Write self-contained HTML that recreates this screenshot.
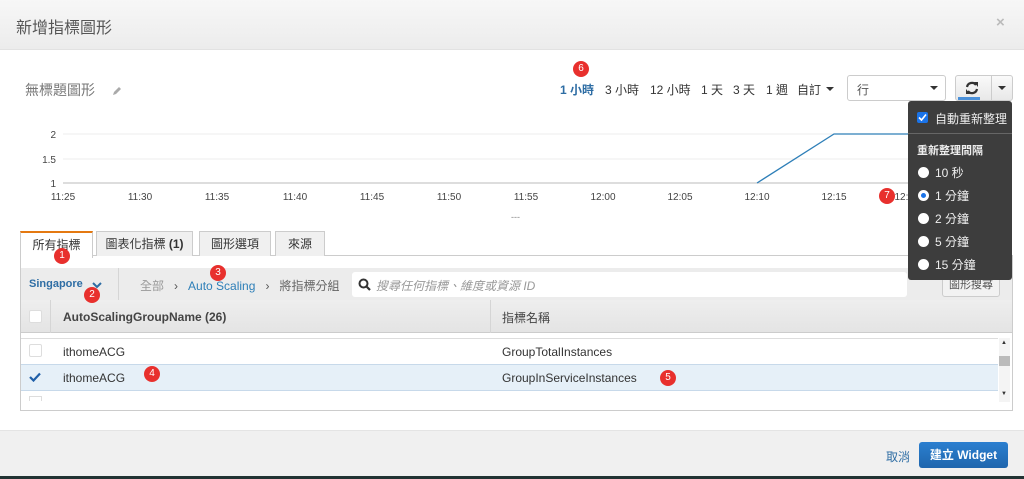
<!DOCTYPE html>
<html><head><meta charset="utf-8"><style>
*{box-sizing:border-box;margin:0;padding:0}
body{width:1024px;height:479px;overflow:hidden;position:relative;background:#fff;font-family:"Liberation Sans","Noto Sans CJK TC",sans-serif;font-size:12px;color:#333}
.a{position:absolute;white-space:nowrap}
.hdr{left:0;top:0;width:1024px;height:50px;background:linear-gradient(#f7f7f7,#ececec);border-bottom:1px solid #e2e2e2}
.ftr{left:0;top:430px;width:1024px;height:49px;background:#f0f0f0;border-top:1px solid #e4e4e4}
.b{position:absolute;width:16px;height:16px;border-radius:50%;background:#e8302d;color:#fff;font-size:10px;text-align:center;line-height:16px}
.xl{position:absolute;top:192px;font-size:10px;color:#444;transform:translateX(-50%)}
.tab{position:absolute;top:231px;height:25px;border:1px solid #ccc;border-bottom:none;background:#f0f0f0;text-align:center;line-height:24px;font-size:12px}
.dd{position:absolute;left:908px;top:101px;width:104px;height:179px;background:#3d3d3d;border-radius:3px;color:#eee;font-size:12px}
.rd{position:absolute;left:10px;width:11px;height:11px;border-radius:50%;background:#fff}
.car{position:absolute;width:0;height:0;border-left:4px solid transparent;border-right:4px solid transparent;border-top:4px solid #333}
.tr{position:absolute;top:81px;font-size:12px;color:#333;white-space:nowrap}
</style></head><body>
<div class="a hdr"></div>
<div class="a" style="left:16px;top:14px;font-size:16px;color:#555">新增指標圖形</div>
<div class="a" style="left:996px;top:14px;font-size:15px;color:#bbb;font-weight:bold">×</div>

<div class="a" style="left:25px;top:80px;font-size:14px;color:#777">無標題圖形</div>
<svg class="a" style="left:111px;top:85px" width="12" height="12"><path d="M2 10 L3 7 L8 2 L10 4 L5 9 Z" fill="#aaa"/></svg>

<div class="tr" style="left:560px;color:#2e6da4;font-weight:bold">1 小時</div>
<div class="tr" style="left:605px">3 小時</div>
<div class="tr" style="left:650px">12 小時</div>
<div class="tr" style="left:701px">1 天</div>
<div class="tr" style="left:733px">3 天</div>
<div class="tr" style="left:766px">1 週</div>
<div class="tr" style="left:797px">自訂</div>
<div class="car" style="left:826px;top:87px"></div>
<div class="a" style="left:847px;top:75px;width:99px;height:26px;border:1px solid #ccc;border-radius:3px"><span class="a" style="left:9px;top:5px;color:#555">行</span><div class="car" style="left:82px;top:10px"></div></div>
<div class="a" style="left:955px;top:75px;width:58px;height:26px;border:1px solid #ccc;border-radius:3px;background:linear-gradient(#fafafa,#e8e8e8)">
<svg class="a" style="left:8px;top:5px" width="16" height="14" viewBox="0 0 16 14"><path d="M3 6 A5 5 0 0 1 12 4" fill="none" stroke="#333" stroke-width="2.2"/><path d="M10 1 L14 1 L14 6 Z" fill="#333"/><path d="M13 8 A5 5 0 0 1 4 10" fill="none" stroke="#333" stroke-width="2.2"/><path d="M6 13 L2 13 L2 8 Z" fill="#333"/></svg>
<span class="a" style="left:35px;top:0;height:24px;border-left:1px solid #ccc"></span><div class="car" style="left:42px;top:10px"></div></div>
<div class="a" style="left:958px;top:97px;width:22px;height:3px;background:#4a90d9"></div>

<svg class="a" style="left:0;top:120px" width="1024" height="80">
<line x1="63" y1="14" x2="1012" y2="14" stroke="#eee"/>
<line x1="63" y1="39" x2="1012" y2="39" stroke="#eee"/>
<line x1="63" y1="63" x2="1012" y2="63" stroke="#bbb"/>
<polyline points="757,63 834,14 1012,14" fill="none" stroke="#2e7fb8" stroke-width="1.3"/>
<text x="56" y="18" font-size="10" text-anchor="end" fill="#444" font-family="Liberation Sans">2</text>
<text x="56" y="43" font-size="10" text-anchor="end" fill="#444" font-family="Liberation Sans">1.5</text>
<text x="56" y="67" font-size="10" text-anchor="end" fill="#444" font-family="Liberation Sans">1</text>
</svg>
<div class="xl" style="left:63px">11:25</div><div class="xl" style="left:140px">11:30</div><div class="xl" style="left:217px">11:35</div><div class="xl" style="left:295px">11:40</div><div class="xl" style="left:372px">11:45</div><div class="xl" style="left:449px">11:50</div><div class="xl" style="left:526px">11:55</div><div class="xl" style="left:603px">12:00</div><div class="xl" style="left:680px">12:05</div><div class="xl" style="left:757px">12:10</div><div class="xl" style="left:834px">12:15</div><div class="xl" style="left:907px">12:20</div>
<div class="a" style="left:511px;top:212px;font-size:9px;color:#888">---</div>

<div class="a" style="left:20px;top:255px;width:993px;height:156px;border:1px solid #ccc"></div>
<div class="tab" style="left:20px;width:73px;background:#fff;border-top:2px solid #e47911;height:27px">所有指標</div>
<div class="tab" style="left:96px;width:97px">圖表化指標 <b>(1)</b></div>
<div class="tab" style="left:199px;width:72px">圖形選項</div>
<div class="tab" style="left:275px;width:50px">來源</div>

<div class="a" style="left:21px;top:268px;width:991px;height:32px;background:#ececec"></div>
<div class="a" style="left:29px;top:278px;color:#2e6da4;font-weight:bold;font-size:11px">Singapore</div>
<svg class="a" style="left:92px;top:281px" width="10" height="8"><path d="M1 2 L5 6 L9 2" fill="none" stroke="#2e6da4" stroke-width="2"/></svg>
<div class="a" style="left:118px;top:268px;height:32px;border-left:1px solid #d5d5d5"></div>
<div class="a" style="left:140px;top:277px;color:#999">全部 &nbsp;&nbsp;<span style="color:#555">›</span>&nbsp;&nbsp; <span style="color:#2e7fb8">Auto Scaling</span> &nbsp;&nbsp;<span style="color:#555">›</span>&nbsp;&nbsp; <span style="color:#666">將指標分組</span></div>
<div class="a" style="left:352px;top:272px;width:555px;height:25px;background:#fff;border-radius:3px">
<svg class="a" style="left:6px;top:6px" width="13" height="13"><circle cx="5.5" cy="5.5" r="4" fill="none" stroke="#333" stroke-width="2"/><line x1="8.5" y1="8.5" x2="12" y2="12" stroke="#333" stroke-width="2.2"/></svg>
<span class="a" style="left:24px;top:5px;font-style:italic;color:#999">搜尋任何指標、維度或資源 ID</span></div>
<div class="a" style="left:942px;top:272px;width:58px;height:25px;border:1px solid #ccc;border-radius:3px;background:#f2f2f2;font-size:11px;color:#555;text-align:center;line-height:24px">圖形搜尋</div>

<div class="a" style="left:21px;top:300px;width:991px;height:33px;background:linear-gradient(#eee,#e4e4e4);border-bottom:1px solid #ccc"></div>
<div class="a" style="left:50px;top:300px;height:33px;border-left:1px solid #d5d5d5"></div>
<div class="a" style="left:490px;top:300px;height:33px;border-left:1px solid #d5d5d5"></div>
<div class="a" style="left:29px;top:310px;width:13px;height:13px;background:#fff;border-radius:2px;border:1px solid #ddd"></div>
<div class="a" style="left:63px;top:310px;font-weight:bold;color:#444">AutoScalingGroupName (26)</div>
<div class="a" style="left:502px;top:309px;color:#444">指標名稱</div>

<div class="a" style="left:21px;top:338px;width:977px;height:26px;border-top:1px solid #ddd"></div>
<div class="a" style="left:29px;top:344px;width:13px;height:13px;border:1px solid #ddd;border-radius:2px"></div>
<div class="a" style="left:63px;top:345px">ithomeACG</div>
<div class="a" style="left:502px;top:345px">GroupTotalInstances</div>
<div class="a" style="left:21px;top:364px;width:977px;height:27px;background:#e6f0f8;border-top:1px solid #c7d9ea;border-bottom:1px solid #c7d9ea"></div>
<svg class="a" style="left:29px;top:372px" width="12" height="10"><path d="M1 5 L4.5 8.5 L11 1.5" fill="none" stroke="#1f5fa8" stroke-width="2.2"/></svg>
<div class="a" style="left:63px;top:371px">ithomeACG</div>
<div class="a" style="left:502px;top:371px">GroupInServiceInstances</div>
<div class="a" style="left:29px;top:396px;width:13px;height:5px;border:1px solid #ddd;border-bottom:none"></div>
<div class="a" style="left:999px;top:338px;width:11px;height:64px;background:#f4f4f4"></div>
<div class="a" style="left:999px;top:356px;width:11px;height:10px;background:#bbb"></div>
<div class="a" style="left:1001px;top:340px;font-size:6px">▲</div><div class="a" style="left:1001px;top:391px;font-size:6px">▼</div>

<div class="dd">
<div class="a" style="left:9px;top:11px;width:11px;height:11px;background:#1a73e8;border-radius:2px"></div>
<svg class="a" style="left:10px;top:12px" width="9" height="9"><path d="M1 4.5 L3.5 7 L8 1.5" fill="none" stroke="#fff" stroke-width="1.6"/></svg>
<div class="a" style="left:27px;top:9px">自動重新整理</div>
<div class="a" style="left:0;top:32px;width:104px;border-top:1px solid #666"></div>
<div class="a" style="left:9px;top:41px;font-weight:bold;font-size:11px">重新整理間隔</div>
<div class="rd" style="top:66px"></div><div class="a" style="left:27px;top:63px">10 秒</div>
<div class="rd" style="top:89px;border:3px solid #fff;background:#1a73e8"></div><div class="a" style="left:27px;top:86px">1 分鐘</div>
<div class="rd" style="top:112px"></div><div class="a" style="left:27px;top:109px">2 分鐘</div>
<div class="rd" style="top:135px"></div><div class="a" style="left:27px;top:132px">5 分鐘</div>
<div class="rd" style="top:158px"></div><div class="a" style="left:27px;top:155px">15 分鐘</div>
</div>

<div class="a ftr"></div>
<div class="a" style="left:886px;top:448px;color:#2e6da4">取消</div>
<div class="a" style="left:919px;top:442px;width:89px;height:26px;background:linear-gradient(#2b7fd0,#1f66ad);border-radius:3px;color:#fff;font-weight:bold;text-align:center;line-height:26px">建立 Widget</div>
<div class="a" style="left:0;top:476px;width:1024px;height:3px;background:#233"></div>

<div class="b" style="left:573px;top:61px">6</div>
<div class="b" style="left:54px;top:248px">1</div>
<div class="b" style="left:84px;top:287px">2</div>
<div class="b" style="left:210px;top:265px">3</div>
<div class="b" style="left:144px;top:366px">4</div>
<div class="b" style="left:660px;top:370px">5</div>
<div class="b" style="left:879px;top:188px">7</div>
</body></html>
